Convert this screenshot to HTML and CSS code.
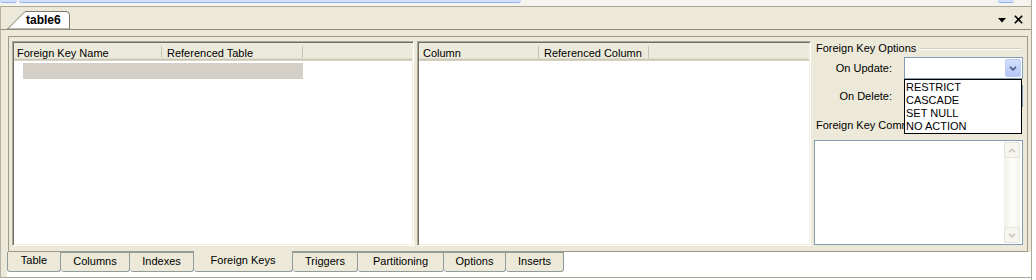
FILE: index.html
```html
<!DOCTYPE html>
<html lang="en">
<head>
  <meta charset="UTF-8" />
  <title>table6 - Foreign Keys</title>
  <link rel="stylesheet" href="styles.css">
</head>
<body>
  <div class="window">
    <div class="main">

      <div class="topstrip">
        <span class="thumb thumb-a"></span>
        <span class="thumb thumb-b"></span>
        <span class="thumb thumb-c"></span>
      </div>

      <div class="doc-bar">
        <div class="doc-tab">
          <svg class="doc-tab-shape" width="63" height="18" viewBox="0 0 63 18">
            <path d="M0.5 18 L16.5 2 Q17.5 0.5 19 0.5 L59 0.5 Q62.5 0.5 62.5 4 L62.5 18 Z" fill="#fefefe" stroke="#7a7868" />
          </svg>
          <span class="doc-tab-label">table6</span>
        </div>
        <div class="doc-tools">
          <svg class="tool-menu" width="8" height="5" viewBox="0 0 8 5"><path d="M0 0 H8 L4 4.5 Z" fill="#000" /></svg>
          <svg class="tool-close" width="9" height="9" viewBox="0 0 9 9"><path d="M0.8 0.8 L8.2 8.2 M8.2 0.8 L0.8 8.2" stroke="#000" stroke-width="1.6" /></svg>
        </div>
      </div>

      <div class="editor">
        <div class="panel">

          <div class="list list-fk">
            <div class="list-head">
              <div class="col col-fkname">Foreign Key Name</div>
              <div class="col col-reftable">Referenced Table</div>
            </div>
            <div class="row-selected"></div>
          </div>

          <div class="list list-cols">
            <div class="list-head">
              <div class="col col-column">Column</div>
              <div class="col col-refcolumn">Referenced Column</div>
            </div>
          </div>

          <div class="options">
            <div class="group-title">
              <span>Foreign Key Options</span>
              <span class="group-line"></span>
            </div>

            <div class="field field-update">
              <label>On Update:</label>
              <div class="combo">
                <span class="combo-btn">
                  <svg width="8" height="5" viewBox="0 0 8 5"><path d="M1 0.8 L4 3.8 L7 0.8" fill="none" stroke="#4d6185" stroke-width="1.8" /></svg>
                </span>
                <ul class="combo-popup">
                  <li>RESTRICT</li>
                  <li>CASCADE</li>
                  <li>SET NULL</li>
                  <li>NO ACTION</li>
                </ul>
              </div>
            </div>

            <div class="field field-delete">
              <label>On Delete:</label>
              <div class="combo">
                <span class="combo-btn">
                  <svg width="8" height="5" viewBox="0 0 8 5"><path d="M1 0.8 L4 3.8 L7 0.8" fill="none" stroke="#4d6185" stroke-width="1.8" /></svg>
                </span>
              </div>
            </div>

            <div class="group-title group-comments">
              <span>Foreign Key Comm</span>
              <span class="group-line"></span>
            </div>

            <div class="textarea">
              <div class="textarea-body"></div>
              <div class="vscroll">
                <span class="vscroll-btn">
                  <svg width="8" height="5" viewBox="0 0 8 5"><path d="M1 4.2 L4 1.2 L7 4.2" fill="none" stroke="#c8c6b9" stroke-width="1.6" /></svg>
                </span>
                <span class="vscroll-btn">
                  <svg width="8" height="5" viewBox="0 0 8 5"><path d="M1 0.8 L4 3.8 L7 0.8" fill="none" stroke="#c8c6b9" stroke-width="1.6" /></svg>
                </span>
              </div>
            </div>
          </div>

        </div>

        <div class="tabs">
          <div class="tab">Table</div>
          <div class="tab">Columns</div>
          <div class="tab">Indexes</div>
          <div class="tab active">Foreign Keys</div>
          <div class="tab">Triggers</div>
          <div class="tab">Partitioning</div>
          <div class="tab">Options</div>
          <div class="tab">Inserts</div>
        </div>
      </div>

    </div>
  </div>
</body>
</html>
```

FILE: styles.css
```css
* { margin: 0; padding: 0; box-sizing: border-box; }
body {
  width: 1036px;
  height: 280px;
  overflow: hidden;
  background: #fff;
  font-family: "Liberation Sans", Arial, sans-serif;
  font-size: 11px;
  color: #000;
}
.window { display: flex; height: 280px; }
.main {
  width: 1032px;
  border-right: 1px solid #aca899;
  display: flex;
  flex-direction: column;
}

/* leftover scrollbar strip on top */
.topstrip {
  height: 7px;
  background: #f4f3ee;
  border-bottom: 1px solid #aca899;
  display: flex;
  align-items: flex-start;
}
.thumb {
  height: 3px;
  background: #d3dffa;
  border-bottom: 1px solid #8fb0ea;
  border-radius: 0 0 3px 3px;
}
.thumb-a { width: 17px; }
.thumb-b { width: 502px; margin-left: 2px; }
.thumb-c { width: 16px; margin-left: 477px; }

/* document tab bar */
.doc-bar {
  height: 23px;
  background: #ece9d8;
  border-left: 1px solid #b6b3a4;
  border-bottom: 1px solid #8e8b7c;
  display: flex;
  align-items: flex-end;
  padding-left: 6px;
}
.doc-tab {
  position: relative;
  width: 63px;
  height: 18px;
}
.doc-tab-shape { position: absolute; top: 0; left: 0; }
.doc-tab-label {
  position: relative;
  display: block;
  padding-left: 19px;
  line-height: 18px;
  font-weight: bold;
  font-size: 12px;
}
.doc-tools {
  margin-left: auto;
  align-self: flex-start;
  margin-top: 8px;
  padding-right: 8px;
  display: flex;
  align-items: flex-start;
  gap: 8px;
}
.tool-menu { margin-top: 3px; }

/* editor body */
.editor {
  height: 248px;
  background: #ece9d8;
  border-left: 1px solid #b6b3a4;
  border-bottom: 1px solid #aca899;
  padding: 6px 3px 0 7px;
  display: flex;
  flex-direction: column;
}
.panel {
  height: 216px;
  border: 1px solid #9c9a8b;
  display: flex;
  padding: 4px 0 5px 3px;
}

.list {
  background: #fff;
  border: 1px solid;
  border-color: #aca899 #fff #fff #aca899;
  box-shadow: inset 1px 1px 0 #716f64, inset -1px -1px 0 #f1efe2;
  padding: 1px;
}
.list-fk { width: 402px; }
.list-cols { width: 394px; margin-left: 3px; }

.list-head {
  height: 18px;
  background: #ebeadb;
  box-shadow: inset 0 -1px 0 #d6d2c2, inset 0 -2px 0 #cbc7b8, inset 0 -3px 0 #e2decd;
  display: flex;
}
.col {
  position: relative;
  line-height: 17px;
  padding-top: 2px;
  padding-left: 4px;
  white-space: nowrap;
}
.col::after {
  content: "";
  position: absolute;
  right: 0; top: 3px; bottom: 3px;
  width: 1px;
  background: #c7c5b2;
}
.col-fkname { width: 148px; padding-left: 3px; }
.col-reftable { width: 141px; padding-left: 5px; }
.col-column { width: 120px; }
.col-refcolumn { width: 110px; padding-left: 5px; }

.row-selected {
  width: 280px;
  height: 16px;
  margin: 2px 0 0 9px;
  background: #d4d0c8;
}

/* right-hand options */
.options {
  flex: 1;
  margin-left: 1px;
  padding: 1px 4px 0 2px;
  display: flex;
  flex-direction: column;
}
.group-title {
  display: flex;
  align-items: center;
  line-height: 13px;
  padding-left: 2px;
  margin-right: 1px;
  white-space: nowrap;
}
.group-line {
  flex: 1;
  height: 2px;
  margin-left: 4px;
  border-top: 1px solid #d0d0bf;
  border-bottom: 1px solid #fff;
}
.field {
  display: grid;
  grid-template-columns: 78px 119px;
  column-gap: 12px;
  align-items: center;
}
.field label { text-align: right; }
.field-update { margin-top: 2px; position: relative; z-index: 2; }
.field-delete { margin-top: 6px; }
.group-comments { margin-top: 12px; }

.combo {
  position: relative;
  height: 22px;
  background: #fff;
  border: 1px solid #7f9db9;
  padding: 1px;
  display: flex;
  justify-content: flex-end;
}
.combo-btn {
  width: 16px;
  height: 18px;
  border: 1px solid #bccbf2;
  border-radius: 2px;
  background: linear-gradient(#d2defc, #b4c7f6);
  display: flex;
  align-items: center;
  justify-content: center;
}
.combo-popup {
  position: absolute;
  top: calc(100% + 1px);
  left: -1px;
  right: 0;
  list-style: none;
  background: #fff;
  border: 1px solid #000;
  padding-top: 1px;
}
.combo-popup li {
  line-height: 13px;
  padding-left: 1px;
}

.textarea {
  margin-top: 8px;
  height: 105px;
  border: 1px solid #7f9db9;
  background: #fff;
  padding: 1px 2px 1px 1px;
  display: flex;
}
.textarea-body { flex: 1; }
.vscroll {
  width: 16px;
  background: linear-gradient(to right, #f3f1ea, #fdfdfb 60%, #f3f1ea);
  display: flex;
  flex-direction: column;
  justify-content: space-between;
}
.vscroll-btn {
  height: 16px;
  border: 1px solid #e6e3d8;
  border-radius: 2px;
  background: #f6f5f0;
  display: flex;
  align-items: center;
  justify-content: center;
}

/* bottom tabs */
.tabs {
  flex: 1;
  margin: 0 -3px 0 -1px;
  background: #fff;
  display: flex;
  align-items: flex-start;
}
.tab {
  height: 20px;
  line-height: 17px;
  text-align: center;
  background: #ece9d8;
  border-right: 1px solid #919b9c;
  border-bottom: 1px solid #919b9c;
  border-radius: 0 0 3px 3px;
  white-space: nowrap;
}
.tab:first-child { border-left: 1px solid #919b9c; width: 54px; }
.tab:nth-child(2) { width: 69px; }
.tab:nth-child(3) { width: 64px; }
.tab:nth-child(4) { width: 99px; }
.tab:nth-child(5) { width: 65px; }
.tab:nth-child(6) { width: 86px; }
.tab:nth-child(7) { width: 62px; }
.tab:nth-child(8) { width: 58px; }
.tab:not(:first-child) { border-top: 1px solid #919b9c; }
.tab.active {
  height: 21px;
  margin-top: -1px;
  border-top: none;
  line-height: 19px;
}
```
